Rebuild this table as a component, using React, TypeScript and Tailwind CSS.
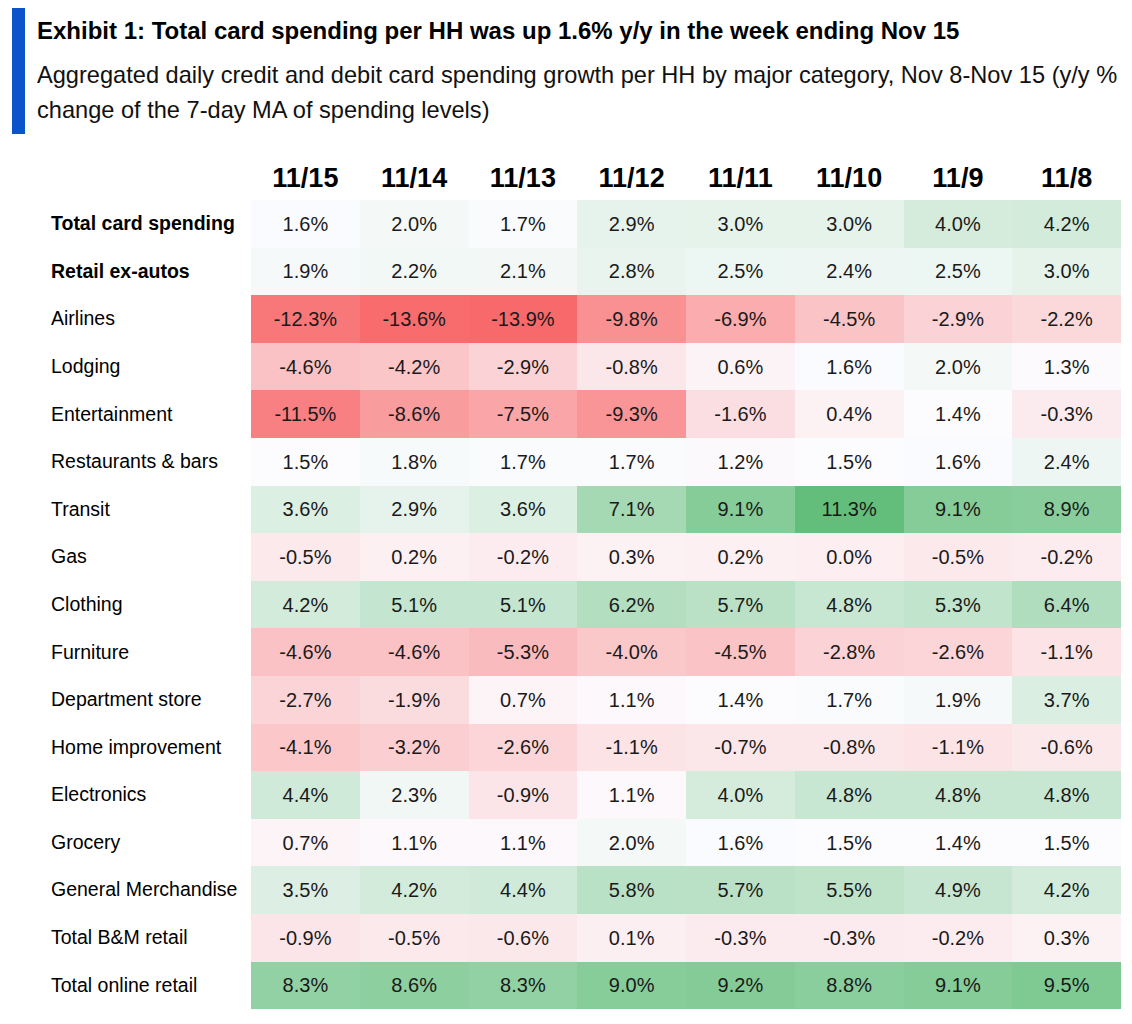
const dates = ['11/15', '11/14', '11/13', '11/12', '11/11', '11/10', '11/9', '11/8']

type Row = { label: string; bold?: boolean; values: number[] }

const rows: Row[] = [
  { label: 'Total card spending', bold: true, values: [1.6, 2.0, 1.7, 2.9, 3.0, 3.0, 4.0, 4.2] },
  { label: 'Retail ex-autos', bold: true, values: [1.9, 2.2, 2.1, 2.8, 2.5, 2.4, 2.5, 3.0] },
  { label: 'Airlines', values: [-12.3, -13.6, -13.9, -9.8, -6.9, -4.5, -2.9, -2.2] },
  { label: 'Lodging', values: [-4.6, -4.2, -2.9, -0.8, 0.6, 1.6, 2.0, 1.3] },
  { label: 'Entertainment', values: [-11.5, -8.6, -7.5, -9.3, -1.6, 0.4, 1.4, -0.3] },
  { label: 'Restaurants & bars', values: [1.5, 1.8, 1.7, 1.7, 1.2, 1.5, 1.6, 2.4] },
  { label: 'Transit', values: [3.6, 2.9, 3.6, 7.1, 9.1, 11.3, 9.1, 8.9] },
  { label: 'Gas', values: [-0.5, 0.2, -0.2, 0.3, 0.2, 0.0, -0.5, -0.2] },
  { label: 'Clothing', values: [4.2, 5.1, 5.1, 6.2, 5.7, 4.8, 5.3, 6.4] },
  { label: 'Furniture', values: [-4.6, -4.6, -5.3, -4.0, -4.5, -2.8, -2.6, -1.1] },
  { label: 'Department store', values: [-2.7, -1.9, 0.7, 1.1, 1.4, 1.7, 1.9, 3.7] },
  { label: 'Home improvement', values: [-4.1, -3.2, -2.6, -1.1, -0.7, -0.8, -1.1, -0.6] },
  { label: 'Electronics', values: [4.4, 2.3, -0.9, 1.1, 4.0, 4.8, 4.8, 4.8] },
  { label: 'Grocery', values: [0.7, 1.1, 1.1, 2.0, 1.6, 1.5, 1.4, 1.5] },
  { label: 'General Merchandise', values: [3.5, 4.2, 4.4, 5.8, 5.7, 5.5, 4.9, 4.2] },
  { label: 'Total B&M retail', values: [-0.9, -0.5, -0.6, 0.1, -0.3, -0.3, -0.2, 0.3] },
  { label: 'Total online retail', values: [8.3, 8.6, 8.3, 9.0, 9.2, 8.8, 9.1, 9.5] },
]

// Excel-style 3 colour scale: min red, 50th percentile white, max green
const sorted = rows.flatMap(r => r.values).sort((a, b) => a - b)
const lo = sorted[0]
const hi = sorted[sorted.length - 1]
const pos = 0.5 * (sorted.length - 1)
const mid = sorted[Math.floor(pos)] + (sorted[Math.ceil(pos)] - sorted[Math.floor(pos)]) * (pos - Math.floor(pos))

const RED = [248, 105, 107]
const WHITE = [252, 252, 255]
const GREEN = [99, 190, 123]

function mix(a: number[], b: number[], t: number) {
  const c = a.map((x, i) => Math.round(x + (b[i] - x) * t))
  return `rgb(${c[0]}, ${c[1]}, ${c[2]})`
}

function cellColor(v: number) {
  if (v <= mid) return mix(RED, WHITE, (v - lo) / (mid - lo))
  return mix(WHITE, GREEN, (v - mid) / (hi - mid))
}

export default function App() {
  return (
    <div className="w-[1132px] h-[1024px] bg-white text-black font-['Liberation_Sans',Arial,sans-serif]">
      <div className="flex pt-[8px] pl-[12px]">
        <div className="w-[13px] h-[126px] bg-[#0b53c9] shrink-0" />
        <div className="pl-[12px] pt-[6px]">
          <h1 className="text-[24px] leading-[34px] font-bold whitespace-nowrap">
            Exhibit 1: Total card spending per HH was up 1.6% y/y in the week ending Nov 15
          </h1>
          <p className="mt-[10px] text-[23.6px] leading-[35px] whitespace-nowrap text-[#111]">
            Aggregated daily credit and debit card spending growth per HH by major category, Nov 8-Nov 15 (y/y %
            <br />
            change of the 7-day MA of spending levels)
          </p>
        </div>
      </div>

      <div className="mt-[22px] grid grid-cols-[251px_repeat(8,108.75px)]">
        <div className="h-[44px]" />
        {dates.map(d => (
          <div key={d} className="h-[44px] flex items-center justify-center text-[27px] font-bold">
            {d}
          </div>
        ))}
        {rows.map(r => (
          <div key={r.label} className="contents">
            <div className={`h-[47.6px] flex items-center pl-[51px] text-[19.5px] whitespace-nowrap ${r.bold ? 'font-bold' : ''}`}>
              {r.label}
            </div>
            {r.values.map((v, i) => (
              <div
                key={i}
                className="h-[47.6px] flex items-center justify-center text-[20px] text-[#1a1a1a]"
                style={{ backgroundColor: cellColor(v) }}
              >
                {v.toFixed(1)}%
              </div>
            ))}
          </div>
        ))}
      </div>
    </div>
  )
}
